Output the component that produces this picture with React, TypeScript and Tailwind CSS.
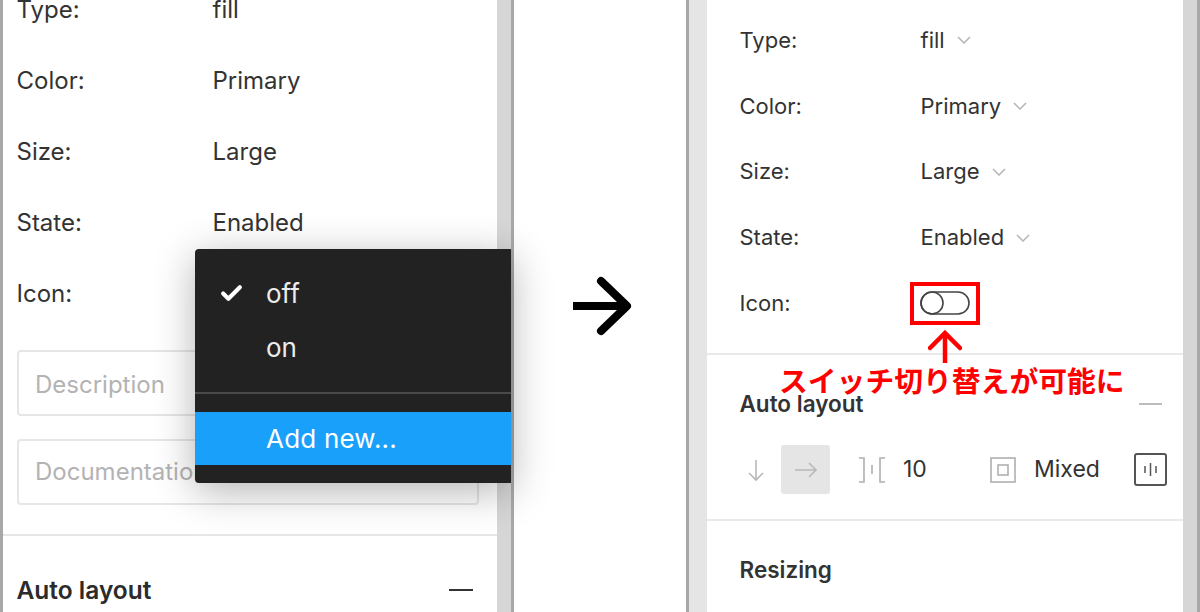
import { Check } from "lucide-react";

const leftRows = [
  ["Type:", "fill"],
  ["Color:", "Primary"],
  ["Size:", "Large"],
  ["State:", "Enabled"],
  ["Icon:", ""],
];

const rightRows = [
  ["Type:", "fill"],
  ["Color:", "Primary"],
  ["Size:", "Large"],
  ["State:", "Enabled"],
];

function Chevron() {
  return (
    <svg className="ml-3 w-[14px] h-[8px]" viewBox="0 0 14 8" fill="none" stroke="#b5b5b5" strokeWidth="1.5">
      <path d="M1 1l6 6 6-6" />
    </svg>
  );
}

function LeftPanel() {
  return (
    <div className="w-[514px] h-full shrink-0 flex border-x-[3px] border-[#a8a8a8] relative">
      <div className="w-[494px] bg-white">
        <div className="-mt-[26px] pl-[13.5px]">
          {leftRows.map(([label, value]) => (
            <div key={label} className="h-[71px] flex items-center text-[24px] text-[#333333]">
              <span className="w-[196px]">{label}</span>
              <span>{value}</span>
            </div>
          ))}
        </div>

        {/* Description fields */}
        <div className="mt-[21px] ml-[14px] w-[462px] flex flex-col gap-[23px]">
          <div className="h-[66px] border-2 border-[#e6e6e6] rounded-[4px] pl-[16px] pt-[3px] flex items-center text-[24px] text-[#b3b3b3]">
            Description
          </div>
          <div className="h-[66px] border-2 border-[#e6e6e6] rounded-[4px] pl-[16px] flex items-center text-[24px] text-[#b3b3b3]">
            Documentation link
          </div>
        </div>

        <div className="mt-[29px] h-[2px] bg-[#e6e6e6]" />

        <div className="mt-[36px] pl-[13.5px] pr-[24px] flex items-center justify-between">
          <span className="text-[24.5px] font-semibold text-[#2b2b2b]">Auto layout</span>
          <span className="w-[24px] h-[2px] bg-[#333333]" />
        </div>
      </div>
      <div className="flex-1 bg-[#d6d6d6]" />

      {/* Dropdown menu */}
      <div className="absolute left-[192px] top-[249px] w-[316px] h-[234px] bg-[#222222] rounded-l-[4px] shadow-[0_8px_40px_rgba(0,0,0,0.3)] pt-[17px] text-[26px] text-[#ececec]">
        <div className="h-[54px] flex items-center pl-[71px] relative">
          <Check className="absolute left-[24px] top-[15px] w-[25px] h-[25px] text-white" strokeWidth={4} />
          off
        </div>
        <div className="h-[54px] flex items-center pl-[71px]">on</div>
        <div className="mt-[18px] h-[2px] bg-[#4a4a4a]" />
        <div className="mt-[18px] h-[53px] bg-[#18a0fb] flex items-center pl-[71px] text-white tracking-[0.2px]">Add new...</div>
      </div>
    </div>
  );
}

function MiddleArrow() {
  return (
    <div className="flex-1 h-full bg-white flex items-center justify-center pl-1">
      <svg width="60" height="62" viewBox="0 0 60 62" fill="none" stroke="#000000" strokeWidth="8" strokeLinecap="round" strokeLinejoin="round">
        <path d="M1 31h54" strokeLinecap="butt" />
        <path d="M29 6l26 25-26 25" />
      </svg>
    </div>
  );
}

function RightPanel() {
  return (
    <div className="w-[514px] h-full shrink-0 flex border-x-[3px] border-[#a8a8a8]">
      <div className="w-[18px] bg-[#e5e5e5]" />
      <div className="w-[476px] bg-white relative">
        <div className="pt-[7.5px] pl-[32.5px]">
          {rightRows.map(([label, value]) => (
            <div key={label} className="h-[65.75px] flex items-center text-[22px] text-[#333333]">
              <span className="w-[181px]">{label}</span>
              <span>{value}</span>
              <Chevron />
            </div>
          ))}
          <div className="h-[65.75px] flex items-center text-[22px] text-[#333333]">
            <span className="w-[180.5px]">Icon:</span>
            <svg width="50" height="24" viewBox="0 0 50 24" fill="none" stroke="#444444" strokeWidth="1.6">
              <rect x="1" y="1" width="48" height="22" rx="11" />
              <circle cx="12" cy="12" r="11" />
            </svg>
          </div>
        </div>

        <div className="mt-[16.75px] h-[2px] bg-[#e9e9e9]" />

        {/* Auto layout */}
        <div className="h-[164px] pl-[32.5px] pr-[21px]">
          <div className="pt-[34px] flex items-center justify-between">
            <span className="text-[22.5px] font-semibold text-[#333333] leading-[30px]">Auto layout</span>
            <span className="w-[23px] h-[2px] bg-[#bdbdbd]" />
          </div>
          <div className="mt-[26px] -mr-[21px] flex items-center text-[23px] text-[#333333]">
            <svg className="ml-[7.5px] shrink-0" width="18" height="24" viewBox="0 0 18 24" fill="none" stroke="#b8b8b8" strokeWidth="1.6">
              <path d="M9 2v20M2 15l7 7 7-7" />
            </svg>
            <div className="ml-[16px] w-[49px] h-[49px] shrink-0 rounded-[3px] bg-[#e5e5e5] flex items-center justify-center">
              <svg width="24" height="18" viewBox="0 0 24 18" fill="none" stroke="#b8b8b8" strokeWidth="1.6">
                <path d="M1 9h21M15 2l7 7-7 7" />
              </svg>
            </div>
            <svg className="ml-[28px] shrink-0" width="28" height="26" viewBox="0 0 28 26" fill="none" stroke="#b0b0b0" strokeWidth="1.6">
              <path d="M1 1h5v24H1M27 1h-5v24h5M14 8v9" />
            </svg>
            <span className="ml-[17px] w-[87px] shrink-0">10</span>
            <svg className="shrink-0" width="26" height="26" viewBox="0 0 26 26" fill="none" stroke="#b0b0b0" strokeWidth="1.6">
              <rect x="1" y="1" width="24" height="24" />
              <rect x="8" y="8" width="10" height="10" />
            </svg>
            <span className="ml-[18px] w-[100px] shrink-0">Mixed</span>
            <div className="w-[33px] h-[33px] shrink-0 border-2 border-[#555555] rounded-[3px] flex items-center justify-center">
              <svg width="15" height="15" viewBox="0 0 15 15" fill="none" stroke="#555555" strokeWidth="1.5">
                <path d="M2 4v7M7.5 1v13M13 4v7" />
              </svg>
            </div>
          </div>
        </div>

        <div className="h-[2px] bg-[#e9e9e9]" />

        <div className="pt-[34px] pl-[32.5px] text-[22.5px] font-semibold text-[#333333] leading-[30px]">Resizing</div>

        {/* Red annotation */}
        <div className="absolute left-[203px] top-[282px] w-[70px] h-[43px] border-4 border-[#ff0000]" />
        <svg className="absolute left-[221px] top-[330px]" width="34" height="34" viewBox="0 0 34 34" fill="none" stroke="#ff0000" strokeWidth="4.5" strokeLinecap="round">
          <path d="M17 4v29" strokeLinecap="butt" />
          <path d="M2 18L17 3l15 15" />
        </svg>
        <div className="absolute left-[72px] top-[359px] text-[28.8px] leading-[42px] font-bold text-[#ff0000] whitespace-nowrap font-['Noto_Sans_CJK_JP',sans-serif]">
          スイッチ切り替えが可能に
        </div>
      </div>
      <div className="flex-1 bg-[#d6d6d6]" />
    </div>
  );
}

export default function App() {
  return (
    <div className="w-[1200px] h-[612px] overflow-hidden flex bg-white font-['Inter',sans-serif]">
      <LeftPanel />
      <MiddleArrow />
      <RightPanel />
    </div>
  );
}
